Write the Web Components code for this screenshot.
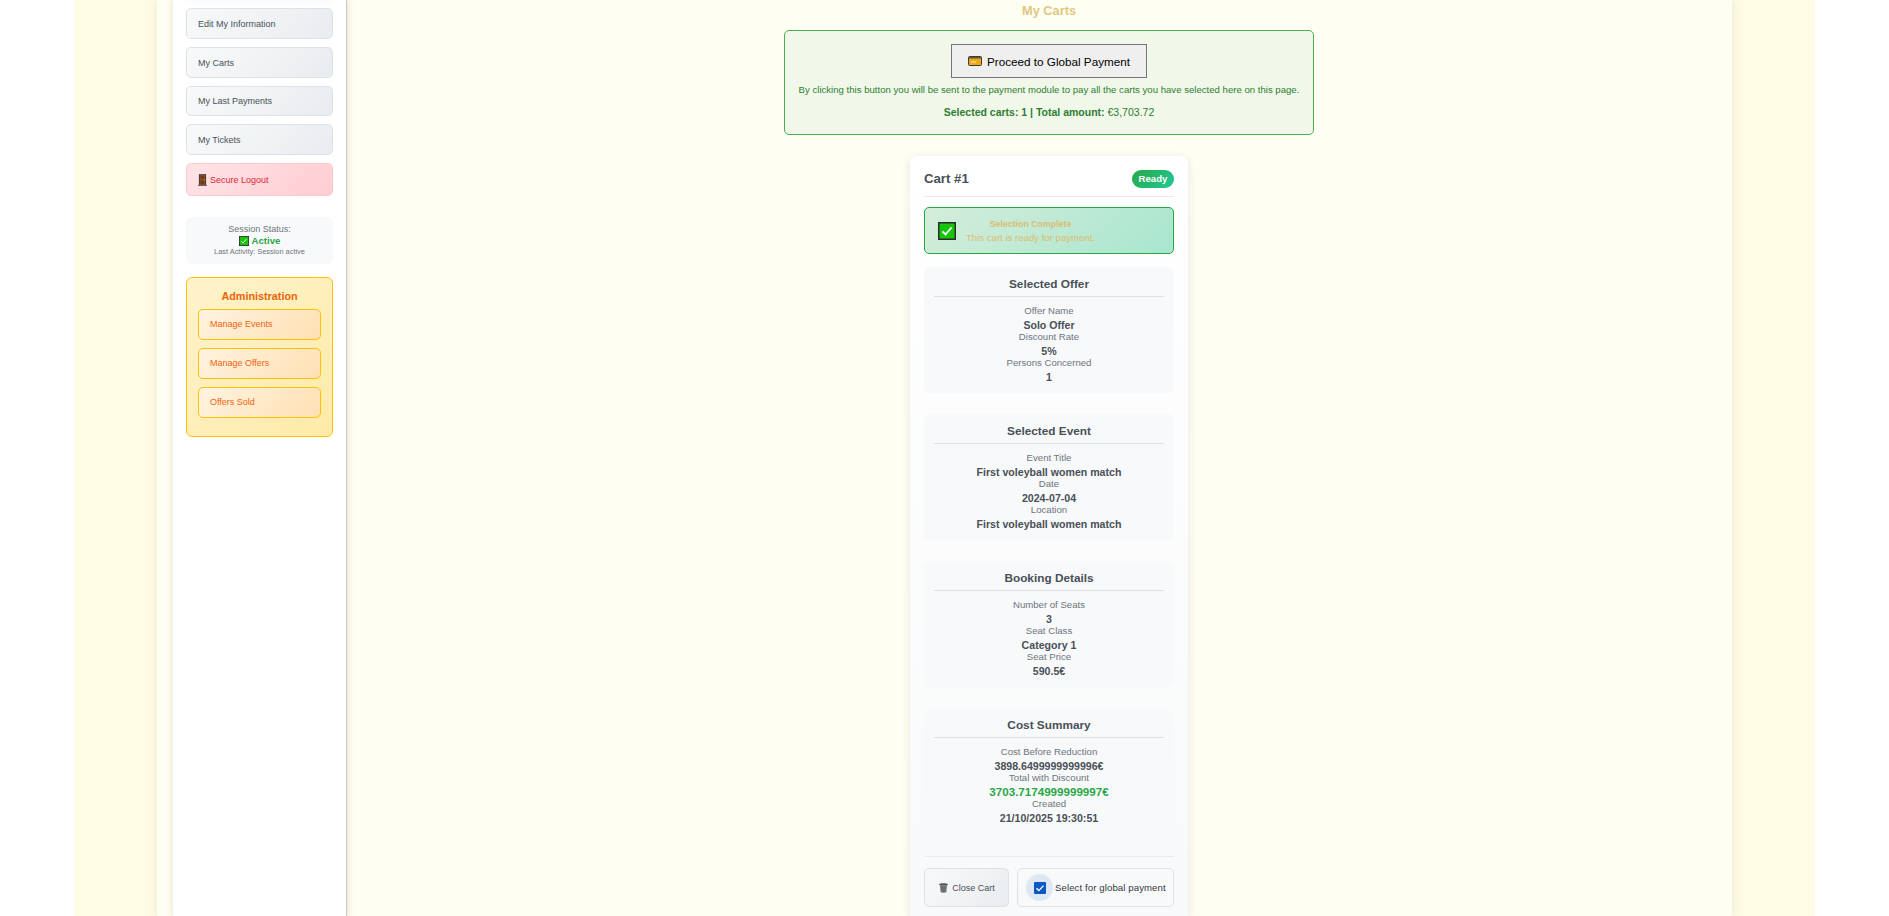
<!DOCTYPE html>
<html lang="en">
<head>
<meta charset="utf-8">
<title>My Carts</title>
<style>
  html, body { margin: 0; height: 916px; overflow: hidden; background: #fff; font-family: "Liberation Sans", Arial, sans-serif; }
</style>
</head>
<body>
<page-shell>
  <side-nav slot="side">
    <nav-link>Edit My Information</nav-link>
    <nav-link>My Carts</nav-link>
    <nav-link>My Last Payments</nav-link>
    <nav-link>My Tickets</nav-link>
    <nav-link variant="logout"><svg slot="icon" width="9" height="12" viewBox="0 0 10 13"><rect x="0" y="12" width="10" height="1" fill="#555"/><rect x="1" y="0" width="8" height="12" fill="#4a3a30"/><rect x="2" y="1" width="6" height="11" fill="#8a5228"/><rect x="3" y="2" width="4" height="3" fill="#6a3c1c"/><rect x="3" y="7" width="4" height="4" fill="#6a3c1c"/><rect x="6.6" y="6" width="1" height="1" fill="#f0c040"/></svg>Secure Logout</nav-link>
    <session-status></session-status>
    <admin-panel>
      <admin-link>Manage Events</admin-link>
      <admin-link>Manage Offers</admin-link>
      <admin-link>Offers Sold</admin-link>
    </admin-panel>
  </side-nav>
  <h-title>My Carts</h-title>
  <pay-banner selected="1" total="€3,703.72"></pay-banner>
  <cart-card cart="Cart #1" status="Ready">
    <cart-section title="Selected Offer">
      <cart-field label="Offer Name">Solo Offer</cart-field>
      <cart-field label="Discount Rate">5%</cart-field>
      <cart-field label="Persons Concerned">1</cart-field>
    </cart-section>
    <cart-section title="Selected Event">
      <cart-field label="Event Title">First voleyball women match</cart-field>
      <cart-field label="Date">2024-07-04</cart-field>
      <cart-field label="Location">First voleyball women match</cart-field>
    </cart-section>
    <cart-section title="Booking Details">
      <cart-field label="Number of Seats">3</cart-field>
      <cart-field label="Seat Class">Category 1</cart-field>
      <cart-field label="Seat Price">590.5€</cart-field>
    </cart-section>
    <cart-section title="Cost Summary">
      <cart-field label="Cost Before Reduction">3898.6499999999996€</cart-field>
      <cart-field label="Total with Discount" highlight>3703.7174999999997€</cart-field>
      <cart-field label="Created">21/10/2025 19:30:51</cart-field>
    </cart-section>
  </cart-card>
</page-shell>

<script>
// small helper so every component reads the same
function shadow(el, html) {
  el.attachShadow({ mode: 'open' });
  el.shadowRoot.innerHTML = html;
}

const CHECK_BOX = size => `<svg width="${size}" height="${size}" viewBox="0 0 18 18" style="flex:none;display:block">
  <rect x=".75" y=".75" width="16.5" height="16.5" fill="#16c60c" stroke="#2b2b2b" stroke-width="1.5"/>
  <path d="M4.5 9.5l3 3 6-7" fill="none" stroke="#fff" stroke-width="1.8"/></svg>`;

class PageShell extends HTMLElement {
  constructor() {
    super();
    shadow(this, `<style>
      :host { display: block; height: 916px; overflow: hidden; }
      .outer { margin: 0 74px; width: 1741px; height: 916px; box-sizing: border-box; padding: 0 83px; background: #fffce6; }
      .inner { display: flex; height: 100%; padding-left: 16px; background: #fffef2; box-shadow: 0 0 10px rgba(120,110,60,.16); }
      .main { flex: 1; min-width: 0; box-sizing: border-box; padding-left: 19px; display: flex; flex-direction: column; align-items: center; }
    </style>
    <div class="outer"><div class="inner">
      <slot name="side"></slot>
      <div class="main"><slot></slot></div>
    </div></div>`);
  }
}

class SideNav extends HTMLElement {
  constructor() {
    super();
    shadow(this, `<style>
      :host { display: flex; flex-direction: column; flex: none; width: 174px; height: 916px; box-sizing: border-box; padding: 8px 13px 0; background: #fff; border-right: 1px solid #c9c9c9; box-shadow: 2px 0 6px rgba(120,110,60,.14), -2px 0 6px rgba(120,110,60,.1); }
      /* the profile card above is scrolled away, only its shadow still shows */
      .above { height: 0; box-shadow: 0 0 6px 1px rgba(0,0,0,.07); margin-top: -8px; margin-bottom: 8px; }
    </style><div class="above"></div><slot></slot>`);
  }
}

class NavLink extends HTMLElement {
  constructor() {
    super();
    const logout = this.getAttribute('variant') === 'logout';
    shadow(this, `<style>
      :host { display: flex; align-items: center; gap: 3px; box-sizing: border-box; height: ${logout ? 33 : 30.8}px; margin-bottom: 8px; padding: 1px 11px 0; border-radius: 5px; font-size: 9px;
        border: 1px solid ${logout ? '#ffc9d0' : '#dee2e6'};
        background: ${logout ? 'linear-gradient(135deg,#ffe3e7,#ffcdd2)' : 'linear-gradient(135deg,#f8f9fa,#e9ecef)'};
        color: ${logout ? '#dc1f35' : '#495057'}; }
    </style><slot name="icon"></slot><slot></slot>`);
  }
}

class SessionStatus extends HTMLElement {
  constructor() {
    super();
    shadow(this, `<style>
      :host { display: block; box-sizing: border-box; height: 47px; margin: 13px 0 13px; padding-top: 6px; border-radius: 6px; background: #f8f9fa; text-align: center; color: #6c757d; font-size: 9px; line-height: 12px; }
      .state { display: flex; justify-content: center; align-items: center; gap: 3px; height: 12px; color: #28a745; font-weight: 700; font-size: 9.6px; }
      .last { font-size: 7.4px; line-height: 10px; }
    </style>
    <div>Session Status:</div>
    <div class="state">${CHECK_BOX(10)}<span>Active</span></div>
    <div class="last">Last Activity: Session active</div>`);
  }
}

class AdminPanel extends HTMLElement {
  constructor() {
    super();
    shadow(this, `<style>
      :host { display: block; box-sizing: border-box; height: 160px; padding: 11px 11px 0; border: 1px solid #ffc107; border-radius: 6px; background: linear-gradient(135deg,#fff3cd,#ffeaa7); }
      h3 { margin: 0 0 5px; height: 15px; font-size: 10.8px; line-height: 15px; text-align: center; color: #e8650a; }
    </style><h3>Administration</h3><slot></slot>`);
  }
}

class AdminLink extends HTMLElement {
  constructor() {
    super();
    shadow(this, `<style>
      :host { display: flex; align-items: center; box-sizing: border-box; height: 30.8px; margin-bottom: 8px; padding: 0 11px 1px; border: 1px solid #ffc107; border-radius: 5px; font-size: 9px; color: #f2640f; background: linear-gradient(135deg,#fff3e0,#ffe0b2); }
    </style><slot></slot>`);
  }
}

class HTitle extends HTMLElement {
  constructor() {
    super();
    shadow(this, `<style>
      :host { display: block; flex: none; height: 30px; font-size: 12.8px; line-height: 21px; font-weight: 700; color: #e0c882; }
    </style><slot></slot>`);
  }
}

class PayBanner extends HTMLElement {
  constructor() {
    super();
    shadow(this, `<style>
      :host { display: block; box-sizing: border-box; width: 530px; height: 105px; padding-top: 13px; border: 1px solid #4caf50; border-radius: 5px; background: #f1f8e9; text-align: center; color: #2e7d32; flex: none; }
      button { display: inline-flex; align-items: center; justify-content: center; gap: 5px; box-sizing: border-box; width: 196px; height: 34px; padding: 0; border: 1px solid #767676; border-radius: 0; background: #efefef; color: #000; font: 11.7px "Liberation Sans", Arial, sans-serif; }
      p { margin: 6px 0 0; font-size: 9.6px; line-height: 12px; }
      .sum { margin-top: 9px; font-size: 10.5px; line-height: 14px; }
    </style>
    <button><svg width="14" height="10" viewBox="0 0 14 10"><rect x=".5" y=".5" width="13" height="9" rx="1" fill="#f0a818" stroke="#3a3a3a"/><rect x="1" y="1" width="12" height="1.6" fill="#6a5a30"/><rect x="3" y="5.5" width="5" height="1" fill="#ffe9a8"/></svg>Proceed to Global Payment</button>
    <p>By clicking this button you will be sent to the payment module to pay all the carts you have selected here on this page.</p>
    <p class="sum"><b>Selected carts: ${this.getAttribute('selected')} | Total amount:</b> ${this.getAttribute('total')}</p>`);
  }
}

class CartCard extends HTMLElement {
  constructor() {
    super();
    shadow(this, `<style>
      :host { display: block; flex: none; box-sizing: border-box; width: 278px; margin-top: 21px; padding: 9px 14px 14px; border-radius: 8px; background: linear-gradient(180deg,#fff,#f8f9fa); box-shadow: 0 2px 10px rgba(0,0,0,.1); color: #495057; }
      .head { display: flex; justify-content: space-between; align-items: center; box-sizing: border-box; height: 32px; padding-bottom: 4px; border-bottom: 1px solid #e9ecef; }
      .name { font-size: 13.2px; font-weight: 700; line-height: 18px; }
      .badge { height: 18px; width: 42px; border-radius: 9px; background: linear-gradient(135deg,#28a745,#20c997); color: #fff; font-size: 9.6px; font-weight: 700; line-height: 18px; text-align: center; }
      .notice { display: flex; align-items: center; box-sizing: border-box; height: 47px; margin: 10px 0 13px; padding-left: 13px; border: 1px solid #28a745; border-radius: 5px; background: linear-gradient(135deg,#d4edda,#a8e6cf); color: #dcbc72; font-size: 9.6px; line-height: 14px; text-align: center; }
      .notice div { margin-left: 10px; }
      .notice b { display: block; font-size: 8.8px; }
      .foot { display: flex; gap: 8px; margin-top: 22px; padding-top: 11px; border-top: 1px solid #e9ecef; }
      .close, .select { box-sizing: border-box; height: 39px; display: flex; align-items: center; border: 1px solid #dee2e6; border-radius: 5px; font-size: 9.6px; }
      .close { width: 85px; justify-content: center; gap: 3px; font-size: 9px; background: linear-gradient(135deg,#f8f9fa,#e9ecef); }
      .select { flex: 1; padding-left: 8px; background: #f8f9fa; gap: 2px; letter-spacing: .1px; color: #343a40; }
      .ring { flex: none; width: 27px; height: 27px; border-radius: 50%; background: #dde8f3; display: flex; align-items: center; justify-content: center; }
    </style>
    <div class="head"><span class="name">${this.getAttribute('cart')}</span><span class="badge">${this.getAttribute('status')}</span></div>
    <div class="notice">${CHECK_BOX(18)}<div><b>Selection Complete</b>This cart is ready for payment.</div></div>
    <slot></slot>
    <div class="foot">
      <div class="close"><svg width="11" height="11" viewBox="0 0 11 11"><path d="M1.2 2.2C2 1 9 1 9.8 2.2L9.8 3.2H1.2z" fill="#555"/><path d="M2 3.2h7l-.7 7.1q-2.8.9-5.6 0z" fill="#6b7074"/></svg>Close Cart</div>
      <div class="select"><span class="ring"><svg width="12" height="12" viewBox="0 0 12 12"><rect width="12" height="12" rx="1" fill="#0b57c5"/><path d="M2.5 6.2l2.4 2.4 4.6-5" fill="none" stroke="#fff" stroke-width="1.4"/></svg></span>Select for global payment</div>
    </div>`);
  }
}

class CartSection extends HTMLElement {
  constructor() {
    super();
    shadow(this, `<style>
      :host { display: block; box-sizing: border-box; height: 126px; margin-bottom: 21px; padding: 10px 10px 0; border-radius: 6px; background: #f8f9fa; text-align: center; }
      h4 { margin: 0 0 8px; height: 20px; box-sizing: border-box; border-bottom: 1px solid #dee2e6; font-size: 11.8px; line-height: 15px; color: #495057; }
    </style><h4>${this.getAttribute('title')}</h4><slot></slot>`);
  }
}

class CartField extends HTMLElement {
  constructor() {
    super();
    const hl = this.hasAttribute('highlight');
    shadow(this, `<style>
      :host { display: block; text-align: center; }
      .l { font-size: 9.6px; line-height: 12px; color: #6c757d; }
      .v { padding-top: 2px; font-size: ${hl ? 11.6 : 10.6}px; line-height: 12px; font-weight: 700; color: ${hl ? '#28a745' : '#495057'}; }
    </style><div class="l">${this.getAttribute('label')}</div><div class="v"><slot></slot></div>`);
  }
}

customElements.define('page-shell', PageShell);
customElements.define('side-nav', SideNav);
customElements.define('nav-link', NavLink);
customElements.define('session-status', SessionStatus);
customElements.define('admin-panel', AdminPanel);
customElements.define('admin-link', AdminLink);
customElements.define('h-title', HTitle);
customElements.define('pay-banner', PayBanner);
customElements.define('cart-card', CartCard);
customElements.define('cart-section', CartSection);
customElements.define('cart-field', CartField);
</script>
</body>
</html>
